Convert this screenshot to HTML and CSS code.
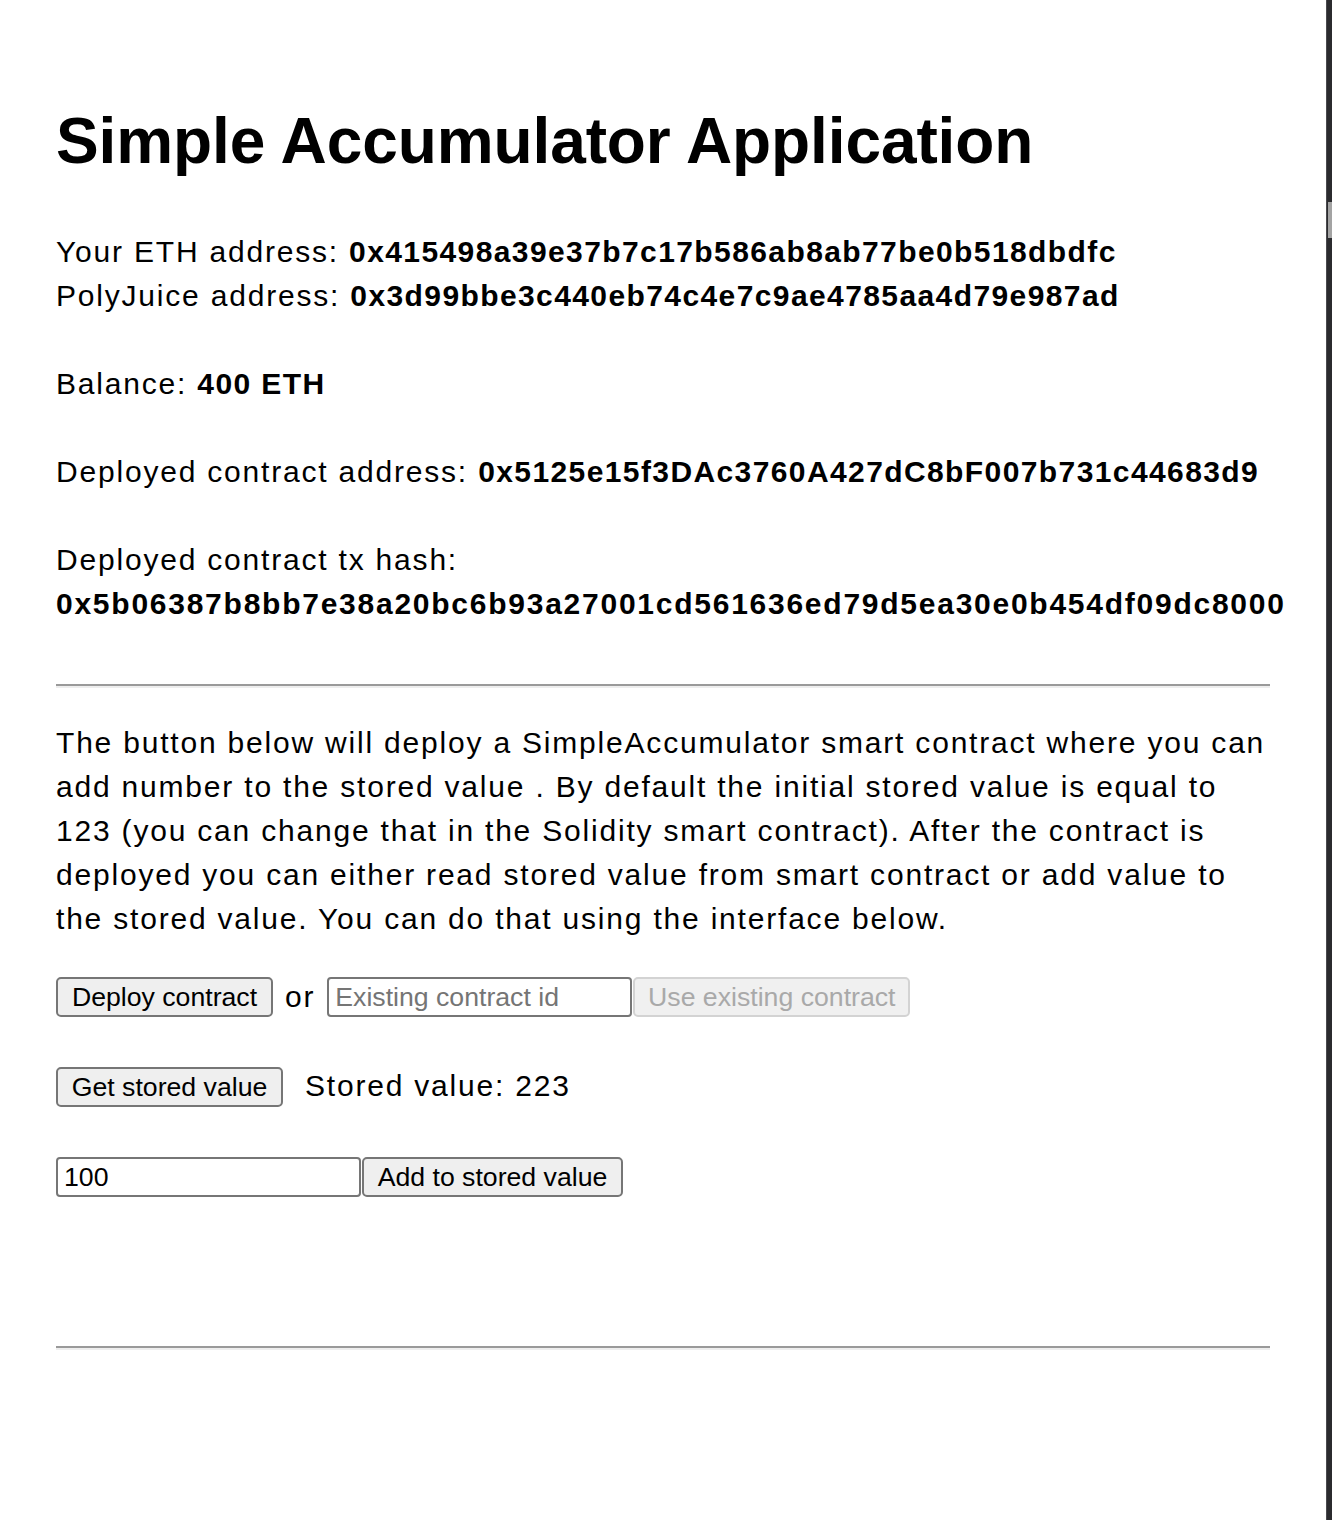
FILE: index.html
```html
<!DOCTYPE html>
<html lang="en">
<head>
<meta charset="utf-8">
<title>Simple Accumulator Application</title>
<link rel="stylesheet" href="styles.css">
</head>
<body>
<div class="app">
  <h1 class="title">Simple Accumulator Application</h1>
  <p class="info">Your ETH address: <b>0x415498a39e37b7c17b586ab8ab77be0b518dbdfc</b><br>PolyJuice address: <b>0x3d99bbe3c440eb74c4e7c9ae4785aa4d79e987ad</b></p>
  <p class="info">Balance: <b>400 ETH</b></p>
  <p class="info nowrap">Deployed contract address: <b>0x5125e15f3DAc3760A427dC8bF007b731c44683d9</b></p>
  <p class="info last">Deployed contract tx hash: <b class="hash">0x5b06387b8bb7e38a20bc6b93a27001cd561636ed79d5ea30e0b454df09dc8000</b></p>
  <hr class="rule">
  <p class="desc">The button below will deploy a SimpleAccumulator smart contract where you can add number to the stored value . By default the initial stored value is equal to 123 (you can change that in the Solidity smart contract). After the contract is deployed you can either read stored value from smart contract or add value to the stored value. You can do that using the interface below.</p>
  <div class="row row-deploy">
    <button class="btn btn-deploy">Deploy contract</button>
    <span class="or">or</span>
    <div class="joined">
      <input class="field" placeholder="Existing contract id">
      <button class="btn btn-use" disabled>Use existing contract</button>
    </div>
  </div>
  <div class="row row-get">
    <button class="btn btn-get">Get stored value</button>
    <span class="stored">Stored value: 223</span>
  </div>
  <div class="row row-add">
    <div class="joined">
      <input class="field" value="100">
      <button class="btn btn-add">Add to stored value</button>
    </div>
  </div>
  <hr class="rule rule-bottom">
</div>
<div class="edge"><div class="edge-thumb"></div></div>
</body>
</html>
```
FILE: styles.css
```css
html, body {
  margin: 0;
  padding: 0;
  background: #fff;
}
body {
  font-family: "Liberation Sans", Arial, sans-serif;
  color: #000;
  font-size: 30px;
  letter-spacing: 1.8px;
  line-height: 44px;
}
.app {
  width: 1214px;
  padding: 0 56px;
}
.title {
  margin: 103px 0 51px;
  font-size: 64px;
  line-height: 76px;
  font-weight: bold;
  letter-spacing: -0.1px;
}
.info {
  margin: 0 0 44px;
}
.info.last {
  margin-bottom: 58px;
}
.nowrap {
  white-space: nowrap;
}
b {
  font-weight: bold;
  letter-spacing: 1.4px;
}
b.hash {
  letter-spacing: 1.75px;
}
.rule {
  border: 0;
  border-top: 2px solid #9a9a9a;
  border-bottom: 2px solid #eeeeee;
  height: 0;
  margin: 17px 0 33px;
}
.rule-bottom {
  margin-top: 149px;
}
.desc {
  margin: 0 0 36px;
  width: 1214px;
}
.row {
  display: flex;
  align-items: center;
  height: 40px;
}
.row-deploy {
  gap: 12px;
}
.row-get {
  margin-top: 50px;
  gap: 22px;
}
.row-add {
  margin-top: 50px;
}
.joined {
  display: flex;
  gap: 1px;
}
.btn {
  box-sizing: border-box;
  height: 40px;
  margin: 0;
  padding: 0 12px;
  font-family: "Liberation Sans", Arial, sans-serif;
  font-size: 26.67px;
  line-height: 36px;
  letter-spacing: 0;
  color: #000;
  background: #efefef;
  border: 2px solid #767676;
  border-radius: 5px;
}
.btn-deploy { width: 217px; }
.btn-get { width: 227px; }
.btn-add { width: 261px; }
.btn-use {
  width: 277px;
  color: #a9a9a9;
  background: #f0f0f0;
  border-color: #d3d3d3;
}
.or {
  line-height: 40px;
}
.stored {
  line-height: 40px;
  padding-bottom: 2px;
}
.field {
  box-sizing: border-box;
  width: 305px;
  height: 40px;
  margin: 0;
  padding: 0 6px;
  font-family: "Liberation Sans", Arial, sans-serif;
  font-size: 26.67px;
  letter-spacing: 0;
  color: #000;
  background: #fff;
  border: 2px solid #767676;
  border-radius: 4px;
  outline: none;
}
.field::placeholder {
  color: #757575;
}
.edge {
  position: fixed;
  top: 0;
  right: 0;
  width: 6px;
  height: 100%;
  background: #2b2b2e;
  border-left: 1px solid #4a4a4e;
  box-sizing: border-box;
}
.edge-thumb {
  position: absolute;
  top: 202px;
  left: 1px;
  width: 5px;
  height: 36px;
  background: #a3a3a3;
}
```
